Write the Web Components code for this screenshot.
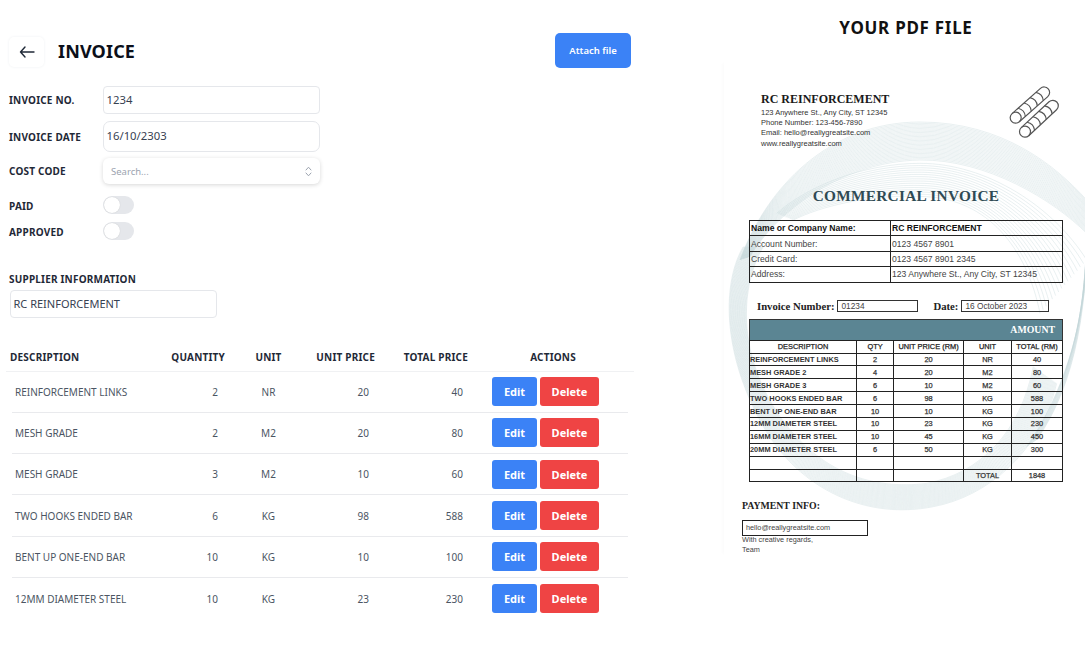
<!DOCTYPE html>
<html>
<head>
<meta charset="utf-8">
<title>Invoice</title>
<style>
  html, body { margin: 0; background: #fff; }
  body { font-family: "Noto Sans", sans-serif; color: #111827; }
</style>
</head>
<body>
<invoice-page>
  <invoice-form slot="form">
    <form-field label="INVOICE NO." value="1234"></form-field>
    <form-field label="INVOICE DATE" value="16/10/2303" tall></form-field>
    <form-select label="COST CODE" placeholder="Search..."></form-select>
    <form-toggle label="PAID"></form-toggle>
    <form-toggle label="APPROVED"></form-toggle>
  </invoice-form>
  <line-table slot="table">
    <line-row desc="REINFORCEMENT LINKS" qty="2" unit="NR" price="20" total="40"></line-row>
    <line-row desc="MESH GRADE" qty="2" unit="M2" price="20" total="80"></line-row>
    <line-row desc="MESH GRADE" qty="3" unit="M2" price="10" total="60"></line-row>
    <line-row desc="TWO HOOKS ENDED BAR" qty="6" unit="KG" price="98" total="588"></line-row>
    <line-row desc="BENT UP ONE-END BAR" qty="10" unit="KG" price="10" total="100"></line-row>
    <line-row desc="12MM DIAMETER STEEL" qty="10" unit="KG" price="23" total="230"></line-row>
  </line-table>
  <pdf-preview slot="pdf"></pdf-preview>
</invoice-page>

<script>
class InvoicePage extends HTMLElement {
  constructor() {
    super();
    this.attachShadow({mode: 'open'}).innerHTML = `
    <style>
      :host { display: grid; grid-template-columns: 724px 361px; width: 1085px; height: 660px; overflow: hidden; }
      .left { padding: 33px 0 0 0; }
      .top { display: flex; align-items: center; justify-content: space-between; width: 631px; height: 35px; }
      .title { display: flex; align-items: center; }
      .back { width: 35px; height: 30px; margin: 2px 0 0 9px; border-radius: 5px; box-shadow: 0 0 3px #eef0f2; display: flex; align-items: center; justify-content: center; }
      h1 { margin: 2px 0 0 14px; font-size: 18px; line-height: 35px; font-weight: 700; letter-spacing: .15px; color: #0b0f19; }
      .attach { width: 76px; height: 35px; border-radius: 5px; background: #3b82f6; color: #fff; font-size: 9.5px; font-weight: 600; display: flex; align-items: center; justify-content: center; }
      h2 { margin: 0 0 3px 9px; font-size: 10px; line-height: 15px; font-weight: 700; color: #1f2937; letter-spacing: .2px; }
      .supplier { margin-top: 28px; }
      .box { margin-left: 9.5px; width: 207px; height: 28px; box-sizing: border-box; border: 1.5px solid #e5e7eb; border-radius: 4px; font-size: 11px; line-height: 25px; padding-left: 3px; color: #374151; }
      .right { text-align: center; }
      .head { font-size: 17px; font-weight: 700; line-height: 24px; margin-top: 16px; padding-left: 3px; letter-spacing: .72px; color: #111; height: 46px; }
    </style>
    <div class="left">
      <div class="top">
        <div class="title">
          <div class="back"><svg width="16" height="12" viewBox="0 0 16 12" fill="none" stroke="#1f2937" stroke-width="1.4" stroke-linecap="round" stroke-linejoin="round"><path d="M15 6H1.500M6 1 1.500 6 6 11"/></svg></div>
          <h1>INVOICE</h1>
        </div>
        <div class="attach">Attach file</div>
      </div>
      <slot name="form"></slot>
      <div class="supplier">
        <h2>SUPPLIER INFORMATION</h2>
        <div class="box">RC REINFORCEMENT</div>
      </div>
      <slot name="table"></slot>
    </div>
    <div class="right">
      <div class="head">YOUR PDF FILE</div>
      <slot name="pdf"></slot>
    </div>`;
  }
}

class InvoiceForm extends HTMLElement {
  constructor() {
    super();
    this.attachShadow({mode: 'open'}).innerHTML = `
    <style>:host { display: flex; flex-direction: column; margin-top: 18px; padding-left: 9px; }</style>
    <slot></slot>`;
  }
}

const fieldCss = `
  :host { display: grid; grid-template-columns: 94px 217px; align-items: center; }
  label { font-size: 10px; font-weight: 700; color: #1f2937; letter-spacing: .2px; }
`;

class FormField extends HTMLElement {
  connectedCallback() {
    const tall = this.hasAttribute('tall');
    this.attachShadow({mode: 'open'}).innerHTML = `
    <style>${fieldCss}
      :host { margin-bottom: ${tall ? 6 : 7}px; }
      .input { height: ${tall ? 31 : 28}px; line-height: ${tall ? 28 : 25}px; border: 1.5px solid #e5e7eb; border-radius: ${tall ? 7 : 4}px; padding-left: 2.5px; font-size: 11.300px; color: #374151; box-sizing: border-box; }
    </style>
    <label>${this.getAttribute('label')}</label>
    <div class="input">${this.getAttribute('value')}</div>`;
  }
}

class FormSelect extends HTMLElement {
  connectedCallback() {
    this.attachShadow({mode: 'open'}).innerHTML = `
    <style>${fieldCss}
      :host { margin-bottom: 8px; }
      .sel { height: 26px; border-radius: 6px; background: #fff; box-shadow: 0 1px 4px rgba(0,0,0,.16); display: flex; align-items: center; justify-content: space-between; padding: 0 8px; font-size: 9.500px; color: #9ca3af; }
    </style>
    <label>${this.getAttribute('label')}</label>
    <div class="sel"><span>${this.getAttribute('placeholder')}</span>
      <svg width="7" height="11" viewBox="0 0 7 11" fill="none" stroke="#9ca3af" stroke-width="1" stroke-linecap="round" stroke-linejoin="round"><path d="M1 4 3.500 1.200 6 4M1 7 3.500 9.800 6 7"/></svg>
    </div>`;
  }
}

class FormToggle extends HTMLElement {
  connectedCallback() {
    this.attachShadow({mode: 'open'}).innerHTML = `
    <style>${fieldCss}
      :host { height: 26px; }
      label { padding-top: 2px; }
      .track { width: 31px; height: 18px; border-radius: 9px; background: #e5e7eb; position: relative; }
      .knob { position: absolute; left: 1px; top: 1px; width: 16px; height: 16px; border-radius: 50%; background: #fff; box-shadow: 0 0 1px rgba(0,0,0,.2); }
    </style>
    <label>${this.getAttribute('label')}</label>
    <div class="track"><div class="knob"></div></div>`;
  }
}

class LineTable extends HTMLElement {
  constructor() {
    super();
    this.attachShadow({mode: 'open'}).innerHTML = `
    <style>
      :host { display: block; margin: 25px 0 0 6px; width: 628px; }
      .head { display: grid; grid-template-columns: 159px 66px 75px 75px 93px 158px; height: 27.500px; align-items: center; border-bottom: 1.5px solid #f0f1f3; font-size: 10px; font-weight: 700; color: #1f2937; letter-spacing: .2px; }
      .head div { white-space: nowrap; }
      .l { padding-left: 4px; }
      .r { text-align: right; padding-right: 6px; }
      .c { text-align: center; }
    </style>
    <div class="head">
      <div class="l">DESCRIPTION</div><div class="r">QUANTITY</div><div class="c">UNIT</div>
      <div class="r">UNIT PRICE</div><div class="r">TOTAL PRICE</div><div class="c">ACTIONS</div>
    </div>
    <slot></slot>`;
  }
}

class LineRow extends HTMLElement {
  connectedCallback() {
    const a = n => this.getAttribute(n);
    this.attachShadow({mode: 'open'}).innerHTML = `
    <style>
      :host { display: grid; grid-template-columns: 153px 66px 75px 75px 93px 154px; margin-left: 6px; width: 616px; height: 41.300px; box-sizing: border-box; align-items: center; border-bottom: 1px solid #e9eaed; font-size: 10px; color: #4b5563; }
      :host(:last-child) { border-bottom: 0; }
      .d { padding-left: 3px; white-space: nowrap; }
      .q { text-align: right; padding-right: 13px; }
      .u { text-align: center; }
      .p { text-align: right; padding-right: 12px; }
      .t { text-align: right; padding-right: 11px; }
      .act { display: flex; gap: 3px; padding-left: 18px; }
      .btn { height: 29px; border-radius: 3px; color: #fff; font-size: 11px; font-weight: 700; display: flex; align-items: center; justify-content: center; }
      .e { width: 45px; background: #3b82f6; }
      .x { width: 59px; background: #ef4444; }
    </style>
    <div class="d">${a('desc')}</div><div class="q">${a('qty')}</div><div class="u">${a('unit')}</div>
    <div class="p">${a('price')}</div><div class="t">${a('total')}</div>
    <div class="act"><div class="btn e">Edit</div><div class="btn x">Delete</div></div>`;
  }
}

// one family of hairlines, blended between two curves given as flat point lists
function band(a, b, n) {
  let d = '';
  for (let i = 0; i < n; i++) {
    const t = i / (n - 1);
    const p = a.map((v, k) => (v + (b[k] - v) * t).toFixed(1));
    d += `M${p[0]} ${p[1]}C${p.slice(2).join(' ')}`;
  }
  return `<path d="${d}"/>`;
}

function swirl() {
  return [
    // outer arc over the title
    band([60,480, 140,260, 330,66, 600,66, 850,66, 1010,200, 1100,300],
         [90,470, 160,350, 350,185, 600,180, 800,178, 1000,300, 1100,400], 30),
    // second arc behind the title
    band([170,340, 260,260, 430,190, 600,190, 800,190, 1000,320, 1100,480],
         [220,360, 300,320, 450,280, 620,290, 800,300, 920,440, 960,640], 16),
    // left side and bottom
    band([70,440, 10,540, 0,750, 130,980, 240,1170, 440,1260, 640,1220, 800,1190, 960,1060, 1010,850],
         [130,440, 60,560, 50,760, 180,950, 300,1120, 460,1170, 620,1150, 780,1120, 900,1000, 940,800], 26),
    // right edge
    band([1100,300, 1110,600, 1070,850, 950,1020],
         [1100,520, 1080,700, 1030,880, 920,1040], 12)
  ].join('');
}

class PdfPreview extends HTMLElement {
  constructor() {
    super();
    const rows = [
      ['REINFORCEMENT LINKS', 2, 20, 'NR', 40], ['MESH GRADE 2', 4, 20, 'M2', 80], ['MESH GRADE 3', 6, 10, 'M2', 60],
      ['TWO HOOKS ENDED BAR', 6, 98, 'KG', 588], ['BENT UP ONE-END BAR', 10, 10, 'KG', 100],
      ['12MM DIAMETER STEEL', 10, 23, 'KG', 230], ['16MM DIAMETER STEEL', 10, 45, 'KG', 450],
      ['20MM DIAMETER STEEL', 6, 50, 'KG', 300], ['', '', '', '', ''], ['', '', '', 'TOTAL', 1848]
    ];
    const bar = `<path d="M0-5.500H38a5.500 5.500 0 0 1 0 11H0"/><circle r="5.500"/><path d="M8-5.500q4 5.500 0 11M16-5.500q4 5.500 0 11M24-5.500q4 5.500 0 11M32-5.500q4 5.500 0 11"/>`;
    this.attachShadow({mode: 'open'}).innerHTML = `
    <style>
      :host { display: block; position: relative; width: 361px; height: 493px; box-sizing: border-box; box-shadow: -3px 0 3px -1px rgba(0,0,0,.015); background: #fff; font-family: "Liberation Sans", sans-serif; text-align: left; color: #333; }
      .swirl { position: absolute; left: 0; top: 0; width: 361px; height: 493px; fill: none; stroke: #c2d5d9; stroke-width: 1.100; overflow: hidden; }
      .sheet { position: relative; padding: 30px 22px 0 25px; }
      .brand { display: flex; justify-content: space-between; padding-left: 12px; height: 94px; }
      .co { font: 700 12px/15px "Liberation Serif", serif; color: #1a1a1a; }
      .addr { margin-top: 1px; font-size: 7.500px; line-height: 10.200px; color: #333; }
      .rebar { margin: -7px 2px 0 0; }
      h3 { margin: 0; text-align: center; font: 700 15.300px/20px "Liberation Serif", serif; color: #2f4a54; letter-spacing: .3px; }
      table { border-collapse: collapse; width: 314px; }
      td, th { border: 1px solid #222; padding: 0 1px; white-space: nowrap; }
      .info { margin-top: 14px; font-size: 8.600px; }
      .info td { height: 14.400px; line-height: 12px; color: #444; }
      .info tr:first-child td { font-weight: 700; color: #111; }
      .meta { display: flex; align-items: center; margin: 17px 0 6px 8px; font: 700 10.700px/13px "Liberation Serif", serif; color: #222; }
      .meta span { display: block; height: 12px; box-sizing: border-box; border: 1px solid #333; font: 8.300px/10px "Liberation Sans", sans-serif; padding-left: 3px; margin-left: 3px; color: #444; }
      .amount { background: #5b8593; color: #fff; height: 21px; width: 314px; box-sizing: border-box; border: 1px solid #333; border-bottom: 0; text-align: right; padding-right: 7px; font: 700 9.800px/20px "Liberation Serif", serif; }
      .lines { font-size: 7.400px; table-layout: fixed; -webkit-text-stroke: .25px; }
      .lines td { height: 11.900px; line-height: 11px; text-align: center; color: #333; }
      .lines th { height: 12px; line-height: 11px; font-weight: 400; text-align: center; color: #222; }
      .lines td:first-child { text-align: left; font-weight: 700; padding: 0; -webkit-text-stroke: 0; }
      .pay { margin: 17px 0 0 -7px; font: 700 9.800px/13px "Liberation Serif", serif; color: #222; }
      .mail { margin: 8px 0 0 -7px; width: 126px; height: 16px; box-sizing: border-box; border: 1px solid #222; font-size: 7.300px; line-height: 14px; padding-left: 3px; color: #444; }
      .bye { margin: -1px 0 0 -7px; font-size: 7.300px; line-height: 9.500px; color: #444; }
    </style>
    <svg class="swirl" viewBox="12 -114 1083 1479">${swirl()}</svg>
    <div class="sheet">
      <div class="brand">
        <div>
          <div class="co">RC REINFORCEMENT</div>
          <div class="addr">123 Anywhere St., Any City, ST 12345<br>Phone Number: 123-456-7890<br>Email: hello@reallygreatsite.com<br>www.reallygreatsite.com</div>
        </div>
        <svg class="rebar" width="56" height="60" viewBox="0 0 56 60" fill="none" stroke="#555" stroke-width="1.200">
          <g transform="translate(10.700 32.700) rotate(-41.600)">${bar}</g>
          <g transform="translate(20 46.700) rotate(-43)">${bar}</g>
        </svg>
      </div>
      <h3>COMMERCIAL INVOICE</h3>
      <table class="info">
        <tr><td style="width:138px">Name or Company Name:</td><td>RC REINFORCEMENT</td></tr>
        <tr><td>Account Number:</td><td>0123 4567 8901</td></tr>
        <tr><td>Credit Card:</td><td>0123 4567 8901 2345</td></tr>
        <tr><td>Address:</td><td>123 Anywhere St., Any City, ST 12345</td></tr>
      </table>
      <div class="meta">Invoice Number:<span style="width:81px">01234</span><i style="width:15px"></i>Date:<span style="width:88px">16 October 2023</span></div>
      <div class="amount">AMOUNT</div>
      <table class="lines">
        <colgroup><col style="width:107px"><col style="width:37px"><col style="width:70px"><col style="width:48px"><col></colgroup>
        <tr><th>DESCRIPTION</th><th>QTY</th><th>UNIT PRICE (RM)</th><th>UNIT</th><th>TOTAL (RM)</th></tr>
        ${rows.map(r => '<tr>' + r.map(c => `<td>${c}</td>`).join('') + '</tr>').join('')}
      </table>
      <div class="pay">PAYMENT INFO:</div>
      <div class="mail">hello@reallygreatsite.com</div>
      <div class="bye">With creative regards,<br>Team</div>
    </div>`;
  }
}

customElements.define('invoice-page', InvoicePage);
customElements.define('invoice-form', InvoiceForm);
customElements.define('form-field', FormField);
customElements.define('form-select', FormSelect);
customElements.define('form-toggle', FormToggle);
customElements.define('line-table', LineTable);
customElements.define('line-row', LineRow);
customElements.define('pdf-preview', PdfPreview);
</script>
</body>
</html>
